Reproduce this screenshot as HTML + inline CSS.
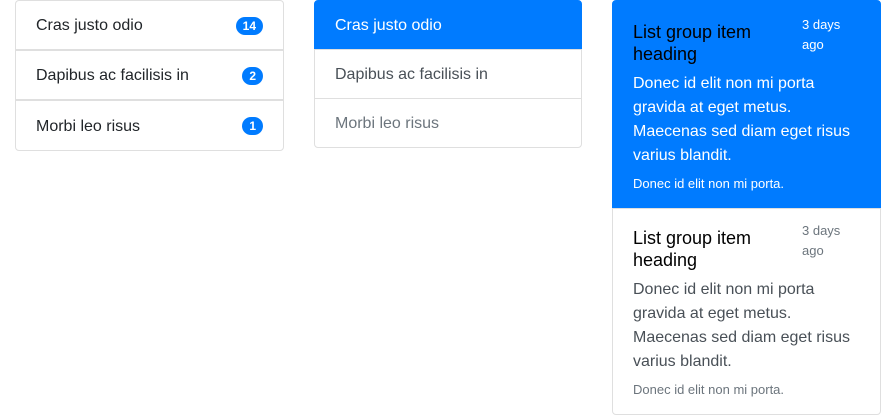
<!DOCTYPE html>
<html><head><meta charset="utf-8"><style>
*{box-sizing:border-box;margin:0;padding:0}
body{width:896px;height:415px;background:#fff;font-family:"Liberation Sans",sans-serif;font-size:16px;line-height:24px;color:#212529;position:relative;overflow:hidden}
.col{position:absolute;top:0}
.it{border:1px solid rgba(0,0,0,.125);padding:13px 20px 11px;display:flex;justify-content:space-between;align-items:center;background:#fff}
.badge{background:#007bff;color:#fff;font-size:12px;font-weight:bold;line-height:12px;padding:3px 7px;border-radius:10px;margin-top:-1px}
.c2 .it{margin-top:-1px}
.act{background:#007bff!important;border-color:#007bff!important;color:#fff}
.c3 .it{display:block;padding:12px 20px}
.row{display:flex;justify-content:space-between}
h5{font-size:18px;font-weight:normal;line-height:21.6px;margin-top:9px;margin-bottom:4px;width:160px;color:#000}
.sm{font-size:13px;line-height:19.5px;width:58px;margin-top:2px}
p{margin-top:3px;margin-bottom:6px}
.fs{font-size:13px;line-height:20px}
</style></head><body>
<div class="col" style="left:15px;width:269px">
 <div class="it" style="height:50px;border-radius:4px 4px 0 0">Cras justo odio<span class="badge">14</span></div>
 <div class="it" style="height:50px;margin-top:0">Dapibus ac facilisis in<span class="badge">2</span></div>
 <div class="it" style="height:51px;border-radius:0 0 4px 4px">Morbi leo risus<span class="badge">1</span></div>
</div>
<div class="col c2" style="left:314px;width:268px">
 <div class="it act" style="height:50px;margin-top:0;border-radius:4px 4px 0 0">Cras justo odio</div>
 <div class="it" style="height:50px;color:#495057">Dapibus ac facilisis in</div>
 <div class="it" style="height:50px;color:#6c757d;border-radius:0 0 4px 4px">Morbi leo risus</div>
</div>
<div class="col c3" style="left:612px;width:269px">
 <div class="it act" style="height:209px;border-radius:4px 4px 0 0">
  <div class="row"><h5>List group item heading</h5><span class="sm">3 days ago</span></div>
  <p>Donec id elit non mi porta gravida at eget metus. Maecenas sed diam eget risus varius blandit.</p>
  <div class="fs">Donec id elit non mi porta.</div>
 </div>
 <div class="it" style="height:207px;margin-top:-1px;padding-top:10px;border-radius:0 0 4px 4px">
  <div class="row"><h5>List group item heading</h5><span class="sm" style="color:#6c757d">3 days ago</span></div>
  <p style="color:#495057">Donec id elit non mi porta gravida at eget metus. Maecenas sed diam eget risus varius blandit.</p>
  <div class="fs" style="color:#6c757d">Donec id elit non mi porta.</div>
 </div>
</div>
</body></html>
